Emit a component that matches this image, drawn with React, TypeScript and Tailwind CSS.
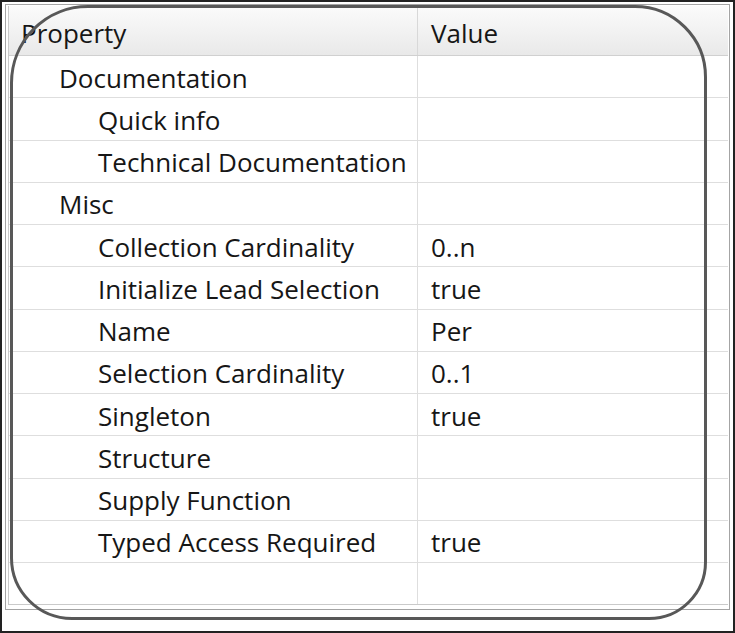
type Row = { label: string; value?: string; level: 1 | 2 };

const rows: Row[] = [
  { label: "Documentation", level: 1 },
  { label: "Quick info", level: 2 },
  { label: "Technical Documentation", level: 2 },
  { label: "Misc", level: 1 },
  { label: "Collection Cardinality", value: "0..n", level: 2 },
  { label: "Initialize Lead Selection", value: "true", level: 2 },
  { label: "Name", value: "Per", level: 2 },
  { label: "Selection Cardinality", value: "0..1", level: 2 },
  { label: "Singleton", value: "true", level: 2 },
  { label: "Structure", level: 2 },
  { label: "Supply Function", level: 2 },
  { label: "Typed Access Required", value: "true", level: 2 },
];

function PropertyRow({ row }: { row: Row }) {
  return (
    <div className="flex h-[42.25px] border-b border-[#dedede]">
      <div
        className={
          "flex w-[409px] shrink-0 items-center border-r border-[#dedede] pt-[2px] " +
          (row.level === 1 ? "pl-[50px]" : "pl-[89px]")
        }
      >
        {row.label}
      </div>
      <div className="flex items-center pl-[13px] pt-[2px]">{row.value}</div>
    </div>
  );
}

export default function App() {
  return (
    <div
      className="relative h-[633px] w-[735px] overflow-hidden border-2 border-[#222] bg-white text-[26px] leading-none text-[#161616]"
      style={{ fontFamily: '"Open Sans", "Noto Sans", sans-serif' }}
    >
      <div className="ml-[3px] mt-[2px] w-[725px] border border-[#a4a4a4] pb-[4px] pl-[2px] pr-[1px] pt-[1px]">
        <div className="border-b border-l border-[#cacaca]">
          {/* header */}
          <div className="flex h-[50px] border-b border-[#d0d0d0] bg-gradient-to-b from-[#fbfbfb] to-[#e9e9e9]">
            <div className="flex w-[409px] shrink-0 items-center border-r border-[#d8d8d8] pl-[12px] pt-[4px]">Property</div>
            <div className="flex items-center pl-[13px] pt-[4px]">Value</div>
          </div>

          {rows.map((row) => (
            <PropertyRow key={row.label} row={row} />
          ))}

          {/* empty trailing row */}
          <div className="flex h-[41px]">
            <div className="w-[409px] shrink-0 border-r border-[#dedede]" />
          </div>
        </div>
      </div>

      {/* hand-drawn highlight frame */}
      <div className="pointer-events-none absolute left-[8px] top-[3px] h-[615px] w-[697px] rounded-[78px_72px_58px_62px] border-[3.5px] border-[#585858]" />
    </div>
  );
}
